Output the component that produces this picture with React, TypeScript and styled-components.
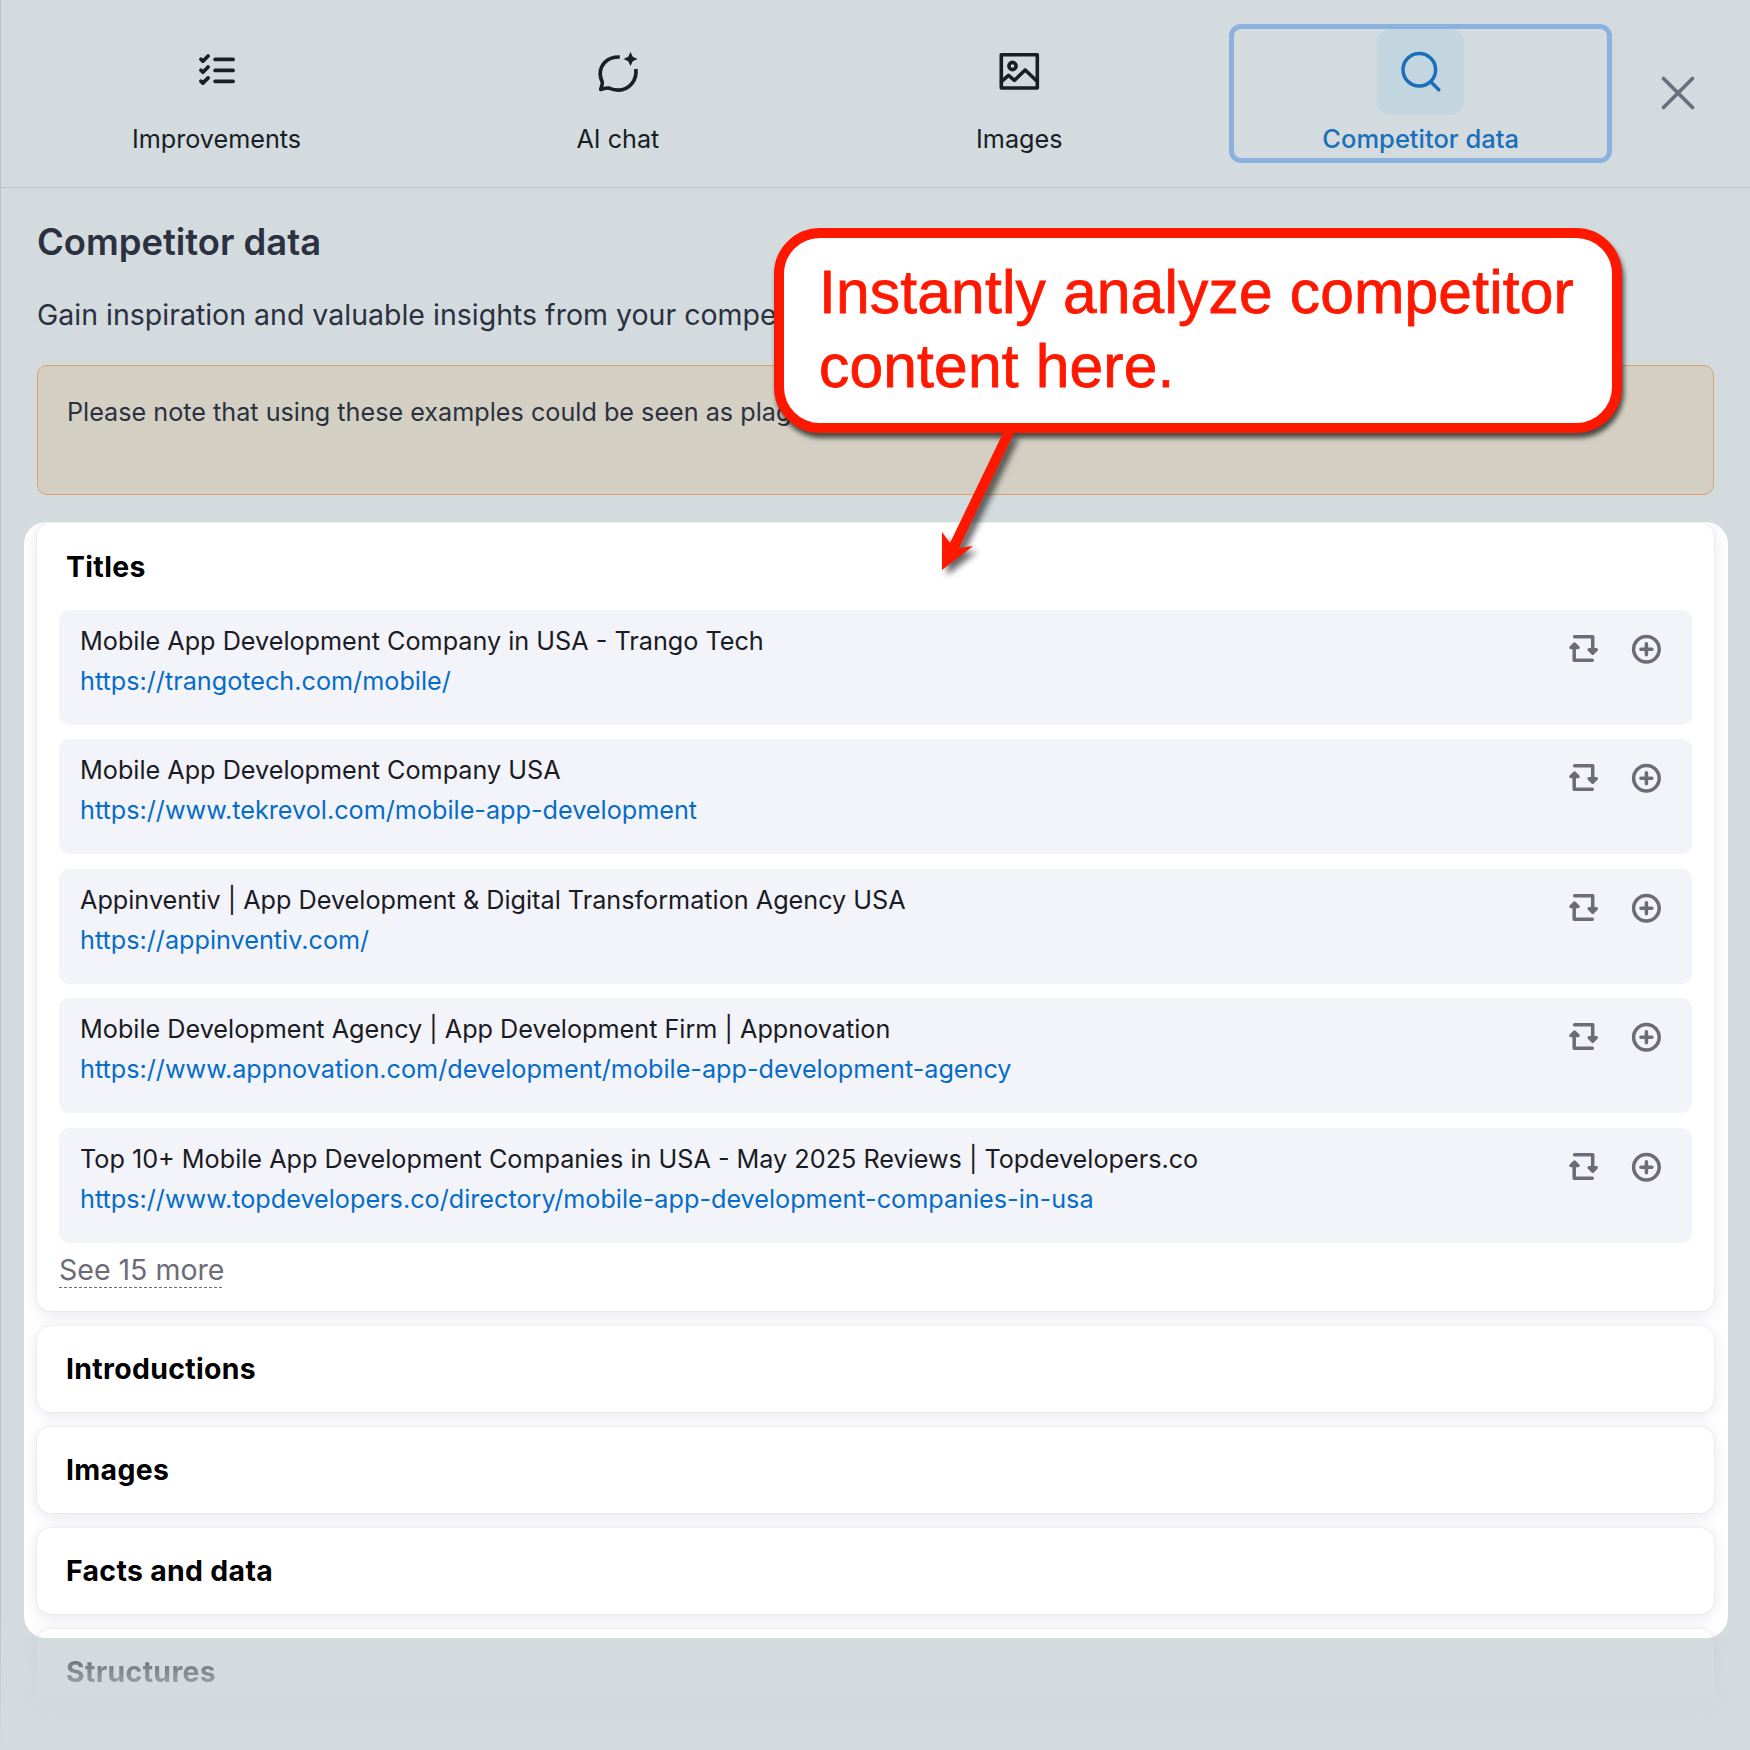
import React from 'react';
import styled, { createGlobalStyle } from 'styled-components';

const Global = createGlobalStyle`
  * { box-sizing: border-box; }
  body { margin: 0; background: #d3dbdf; }
`;

const Page = styled.main`
  position: relative;
  width: 1750px;
  height: 1750px;
  overflow: hidden;
  background: #d3dbdf;
  font-family: Inter, 'Liberation Sans', sans-serif;
  color: #2b3140;
  border-left: 1px solid #bac2cc;
  border-image: linear-gradient(#bac2cc 92%, #d3dbdf) 1;
`;

const Header = styled.header`
  display: flex;
  height: 188px;
  padding: 24px 52px 0 24px;
  border-bottom: 1px solid #bac2cc;
`;

const Tabs = styled.nav`
  display: grid;
  grid-template-columns: repeat(4, 383px);
  column-gap: 18.4px;
  flex: 1;
`;

const Tab = styled.button<{ $active?: boolean }>`
  display: flex;
  flex-direction: column;
  align-items: center;
  height: 139px;
  padding: 0;
  background: none;
  border: 5px solid ${(p) => (p.$active ? '#8bb1de' : 'transparent')};
  border-radius: 12px;
  color: ${(p) => (p.$active ? '#196fba' : '#182024')};
  font: ${(p) => (p.$active ? 500 : 400)} ${(p) => (p.$active ? 25.5 : 25.2)}px/32px Inter, sans-serif;
`;

const TabIcon = styled.span<{ $active?: boolean }>`
  display: grid;
  place-items: center;
  width: 87px;
  height: 86px;
  margin-bottom: 8px;
  border-radius: 14px;
  background: ${(p) => (p.$active ? '#c3d5df' : 'transparent')};
`;

const Close = styled.button`
  width: 40px;
  height: 40px;
  margin-top: 49px;
  padding: 0;
  border: 0;
  background: none;
  color: #687080;
`;

const Intro = styled.section`
  padding: 31px 36px 0 36px;
`;

const Heading = styled.h1`
  margin: 0;
  font-size: 36.4px;
  line-height: 46px;
  font-weight: 600;
`;

const Lead = styled.p`
  margin: 30px 0 0;
  font-size: 28.5px;
  line-height: 40px;
`;

const Notice = styled.div`
  height: 130px;
  margin-top: 30px;
  padding: 29px;
  border: 1px solid #d9a26c;
  border-radius: 10px;
  background: #d3d0c3;
  font-size: 25.2px;
  line-height: 34px;
`;

const Results = styled.section`
  height: 1116px;
  margin: 27px 22px 0 23px;
  padding: 1px 14px 0 13px;
  overflow: hidden;
  border-radius: 22px;
  background: #fff;
`;

const Card = styled.article`
  margin-bottom: 15px;
  border-radius: 14px;
  background: #fff;
  box-shadow: 0 0 2px rgba(60, 60, 120, 0.14), 0 3px 16px rgba(60, 65, 110, 0.13);
`;

const CardTitle = styled.h2<{ $open?: boolean }>`
  margin: 0;
  padding: ${(p) => (p.$open ? 1 : 0)}px 29px 0;
  height: 86px;
  font-size: 28.4px;
  line-height: 86px;
  font-weight: 700;
  letter-spacing: 0.34px;
  color: #000;
`;

const CardBody = styled.div`
  display: flex;
  flex-direction: column;
  align-items: stretch;
  gap: 14.4px;
  height: 702px;
  padding: 1px 22px 0;
`;

const Row = styled.div`
  display: flex;
  justify-content: space-between;
  height: 115px;
  flex: none;
  padding: 11px 30px 0 21px;
  border-radius: 10px;
  background: #f3f4f9;
`;

const RowText = styled.div`
  font-size: 25.21px;
  line-height: 40px;
  color: #191b25;
`;

const RowLink = styled.a`
  display: block;
  color: #066cc8;
`;

const Actions = styled.div`
  display: flex;
  gap: 31px;
  padding-top: 12px;
  color: #6c6c79;

  svg { width: 32px; height: 32px; }
`;

const More = styled.button`
  align-self: flex-start;
  margin: -5px 0 0;
  padding: 0 0 1px;
  border: 0;
  background: repeating-linear-gradient(90deg, #6c6c79 0 3.3px, transparent 3.3px 5px) bottom / 100% 1px no-repeat;
  color: #6c6c79;
  font: 400 28.5px/35px Inter, sans-serif;
`;

const FadeOut = styled.div`
  height: 112px;
  padding: 0 36px;
  overflow: hidden;
  mask-image: linear-gradient(#000, transparent 80px);
`;

const FadedCard = styled.div`
  height: 76px;
  border-radius: 0 0 14px 14px;
  background: #d3dbdf;
  box-shadow: 0 0 14px rgba(120, 130, 190, 0.14);
`;

const FadedTitle = styled.h2`
  margin: 0;
  padding: 17px 29px 0;
  font-size: 28.4px;
  line-height: 34px;
  font-weight: 700;
  letter-spacing: 0.34px;
  color: rgba(0, 0, 0, 0.64);
`;

const Callout = styled.aside`
  position: absolute;
  top: 228px;
  left: 773px;
  width: 848px;
  height: 205px;
  padding: 17px 35px;
  border: 10px solid #ff1800;
  border-radius: 46px;
  background: #fff;
  color: #ff1800;
  font: 400 60.5px/74px 'Liberation Sans', Arial, sans-serif;
  letter-spacing: 0.18px;
  -webkit-text-stroke: 0.8px #ff1800;
  white-space: nowrap;
  box-shadow: 2px 5px 5px rgba(0, 0, 0, 0.65);
`;

const Arrow = styled.svg`
  position: absolute;
  left: 920px;
  top: 420px;
  filter: drop-shadow(5px 5px 3px rgba(0, 0, 0, 0.6));
`;

const stroke = { fill: 'none', stroke: 'currentColor', strokeLinecap: 'round', strokeLinejoin: 'round' } as const;

const ListIcon = () => (
  <svg width="40" height="40" viewBox="0 0 40 40" {...stroke} strokeWidth="3.7">
    <path d="M3.9 7.2L5.9 9.2L11.1 4M3.9 18.2L5.9 20.2L11.1 15M3.9 29.1L5.9 31.1L11.1 25.9M18.1 7.4H36.1M18.1 18.4H36.1M18.1 29.3H36.1" />
  </svg>
);

const ChatIcon = () => (
  <svg width="44" height="44" viewBox="0 0 44 44" {...stroke} strokeWidth="3.7">
    <path
      d="M23.8 7C12 6.6 4.2 14 4.2 24c0 3 .9 5.5 2 8 .5 1.2-.4 4-1.5 7.4 3.5-.8 6.2-1.9 8.3-1.3 3 1.2 6 2 9.3 2C33.5 40.1 41.3 30 39.8 19"
      strokeLinecap="butt"
    />
    <path d="M34.5 2l2.3 4.7L41.5 9l-4.7 2.3L34.5 16l-2.3-4.7L27.5 9l4.7-2.3z" fill="currentColor" stroke="none" />
  </svg>
);

const ImageIcon = () => (
  <svg width="42" height="42" viewBox="0 0 42 42" {...stroke} strokeWidth="3.6">
    <rect x="3.3" y="3.8" width="36" height="33.2" />
    <circle cx="14.5" cy="15" r="3.6" />
    <path d="M3.6 30.3l6.9-6 6 5L27.2 19l12.1 11.5" />
  </svg>
);

const SearchIcon = () => (
  <svg width="42" height="42" viewBox="0 0 42 42" {...stroke} strokeWidth="3.5">
    <circle cx="19.3" cy="18.7" r="16.3" />
    <path d="M31 31l7.8 7.8" />
  </svg>
);

const SwapIcon = () => (
  <svg viewBox="0 0 32 32" {...stroke} strokeWidth="3.5">
    <path d="M7.6 3.8H25.7V18M25.3 27.2H7.2V12.5" />
    <path d="M22 16.6h7.4l-3.7 3.7zM3.8 14.6h7.4L7.5 10.9z" fill="currentColor" strokeWidth="3.2" />
  </svg>
);

const PlusIcon = () => (
  <svg viewBox="0 0 32 32" {...stroke} strokeWidth="3.5">
    <circle cx="16.4" cy="16.3" r="12.8" />
    <path d="M10.9 16.3h11M16.4 10.8v11" />
  </svg>
);

const tabs = [
  { label: 'Improvements', icon: <ListIcon /> },
  { label: 'AI chat', icon: <ChatIcon /> },
  { label: 'Images', icon: <ImageIcon /> },
  { label: 'Competitor data', icon: <SearchIcon />, active: true },
];

const titles = [
  ['Mobile App Development Company in USA - Trango Tech', 'https://trangotech.com/mobile/'],
  ['Mobile App Development Company USA', 'https://www.tekrevol.com/mobile-app-development'],
  ['Appinventiv | App Development & Digital Transformation Agency USA', 'https://appinventiv.com/'],
  ['Mobile Development Agency | App Development Firm | Appnovation', 'https://www.appnovation.com/development/mobile-app-development-agency'],
  ['Top 10+ Mobile App Development Companies in USA - May 2025 Reviews | Topdevelopers.co', 'https://www.topdevelopers.co/directory/mobile-app-development-companies-in-usa'],
];

export default function App() {
  return (
    <Page>
      <Global />
      <Header>
        <Tabs>
          {tabs.map((t) => (
            <Tab key={t.label} $active={t.active}>
              <TabIcon $active={t.active}>{t.icon}</TabIcon>
              {t.label}
            </Tab>
          ))}
        </Tabs>
        <Close aria-label="Close">
          <svg width="40" height="40" viewBox="0 0 40 40" {...stroke} strokeWidth="3.8">
            <path d="M5.5 5.5l29 29M34.5 5.5l-29 29" />
          </svg>
        </Close>
      </Header>
      <Intro>
        <Heading>Competitor data</Heading>
        <Lead>Gain inspiration and valuable insights from your compe</Lead>
        <Notice>Please note that using these examples could be seen as plag</Notice>
      </Intro>
      <Results>
        <Card>
          <CardTitle $open>Titles</CardTitle>
          <CardBody>
            {titles.map(([title, url]) => (
              <Row key={url}>
                <RowText>
                  {title}
                  <RowLink>{url}</RowLink>
                </RowText>
                <Actions>
                  <SwapIcon />
                  <PlusIcon />
                </Actions>
              </Row>
            ))}
            <More>See 15 more</More>
          </CardBody>
        </Card>
        {['Introductions', 'Images', 'Facts and data'].map((name) => (
          <Card key={name}>
            <CardTitle>{name}</CardTitle>
          </Card>
        ))}
        <Card>
          <CardTitle />
        </Card>
      </Results>
      <FadeOut>
        <FadedCard>
          <FadedTitle>Structures</FadedTitle>
        </FadedCard>
      </FadeOut>
      <Callout>
        Instantly analyze competitor
        <br />
        content here.
      </Callout>
      <Arrow width="110" height="170" viewBox="0 0 110 170">
        <path d="M82 13h11L38 128l14-2-31 24 0-38 8 11z" fill="#ff1800" />
      </Arrow>
    </Page>
  );
}
